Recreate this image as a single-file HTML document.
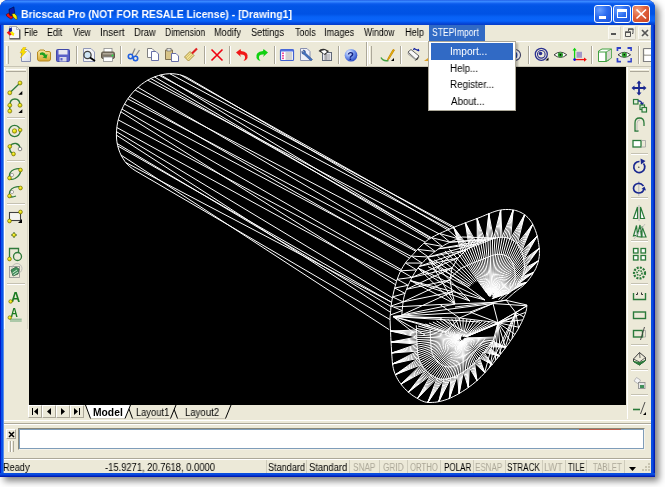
<!DOCTYPE html>
<html><head><meta charset="utf-8">
<style>
*{margin:0;padding:0;box-sizing:border-box}
html,body{width:665px;height:487px;overflow:hidden;background:#fff;font-family:"Liberation Sans",sans-serif;font-size:10px;color:#000;position:relative}
.a{position:absolute}
.t{position:absolute;white-space:nowrap;transform-origin:0 0;will-change:transform}
svg{position:absolute;overflow:visible}
.gr{position:absolute;width:3px;border-left:1px solid #fff;border-right:1px solid #aca899}
.sepv{position:absolute;width:2px;border-left:1px solid #aca899;border-right:1px solid #fff}
.seph{position:absolute;height:2px;border-top:1px solid #c5c2b2;border-bottom:1px solid #fff}
.nb{position:absolute;top:405px;width:14px;height:13px;background:#ece9d8;border:1px solid;border-color:#fff #aca899 #aca899 #fff}
.sp{position:absolute;top:460px;width:1px;height:13px;background:#cfccbc}
</style></head><body>
<!-- shadow -->
<div class="a" style="left:0px;top:0px;width:655px;height:477px;border-radius:8px 8px 0 0;box-shadow:4px 4px 7px rgba(0,0,0,0.5);background:#888"></div>
<div class="a" style="left:0;top:0;width:655px;height:477px;background:#0a3fd6;border-radius:8px 8px 0 0;overflow:hidden">
  <div class="a" style="left:0;top:0;width:655px;height:25px;background:linear-gradient(#1a50e0 0px,#3b8cff 1px,#3382ff 2px,#1a68f2 3px,#0a5aec 4px,#0255e6 6px,#0052e4 14px,#0862f6 17px,#0a64fa 21px,#0656ec 22px,#0442d2 24px,#0a3cc8 25px)"></div>
  <!-- frame side borders -->
  <div class="a" style="left:0;top:25px;width:4px;height:452px;background:linear-gradient(90deg,#0018c8 0,#0018c8 1px,#0850e8 1px,#0a58ee 3px,#5a8ae8 3px,#5a8ae8 4px)"></div>
  <div class="a" style="left:651px;top:25px;width:4px;height:452px;background:linear-gradient(90deg,#0a50e0 0,#0a4ce0 2px,#0020c0 3px,#001aa8 4px)"></div>
  <div class="a" style="left:0;top:473px;width:655px;height:4px;background:linear-gradient(#0a50e0 0,#0848dc 2px,#0020c0 3px,#001aa8 4px)"></div>
  <div class="a" style="left:4px;top:25px;width:647px;height:448px;background:#ece9d8"></div>
</div>
<!-- title icon -->
<svg style="left:0;top:0" width="24" height="24" viewBox="0 0 24 24">
 <path d="M9 9.3 L13.9 6.9 L14.7 13.4 L11.9 15.5 L9.4 14.3 Z" fill="#0a1aa8" stroke="#000830" stroke-width="0.6"/>
 <path d="M6.1 14.7 L8.6 13 L10.2 15.9 L13.1 15.9 L13.1 17.6 L11 19.2 L6.9 16.3 Z" fill="#f01010" stroke="#300000" stroke-width="0.5"/>
 <path d="M11.9 13.9 L14.3 13.4 L16.8 15.9 L17.2 19.2 L16 19.6 L13.1 17.1 Z" fill="#f8f000" stroke="#403000" stroke-width="0.5"/>
</svg>
<!-- title buttons -->
<div class="a" style="left:594px;top:5px;width:18px;height:18px;border:1px solid #fff;border-radius:3px;background:radial-gradient(circle at 30% 25%,#6aa0ff 0,#2b6cf0 45%,#1a50d8 100%)"></div>
<div class="a" style="left:599px;top:16px;width:7px;height:3px;background:#fff"></div>
<div class="a" style="left:613px;top:5px;width:18px;height:18px;border:1px solid #fff;border-radius:3px;background:radial-gradient(circle at 30% 25%,#6aa0ff 0,#2b6cf0 45%,#1a50d8 100%)"></div>
<div class="a" style="left:617px;top:9px;width:10px;height:9px;border:1px solid #fff;border-top-width:3px"></div>
<div class="a" style="left:632px;top:5px;width:18px;height:18px;border:1px solid #fff;border-radius:3px;background:radial-gradient(circle at 30% 25%,#f0a080 0,#e0603a 45%,#c84020 100%)"></div>
<svg style="left:635px;top:8px" width="13" height="12"><path d="M1.5 1.5 L11 10.5 M11 1.5 L1.5 10.5" stroke="#fff" stroke-width="1.7"/></svg>

<!-- menubar -->
<div class="a" style="left:4px;top:41px;width:647px;height:1px;background:#fff"></div>
<svg style="left:0;top:22px" width="24" height="20" viewBox="0 22 24 20">
 <path d="M9.5 26.5 H16.5 L19.5 29.5 V38.5 H9.5 Z" fill="#f8f8f8" stroke="#a0a0a0" stroke-width="0.8"/>
 <path d="M9.5 38.8 H19.8 V29.5" fill="none" stroke="#505050" stroke-width="1.3"/>
 <path d="M16.5 26.5 V29.5 H19.5" fill="none" stroke="#909090" stroke-width="0.6"/>
 <path d="M9 28.5 L11.8 27.3 L12 31.5 L10.3 32.8 L8.7 31.8 Z" fill="#101c98"/>
 <path d="M6.7 32.5 L9 31 L10.5 33 L12 33.5 L11.5 35 L9.5 35.5 Z" fill="#f01818"/>
 <path d="M10.2 32 L12 31.2 L14 33.2 L14.1 35.5 L12.8 35.8 L11 34 Z" fill="#f8e800"/>
</svg>
<div class="a" style="left:428.6px;top:25px;width:56.2px;height:16px;background:#316ac5"></div>
<!-- MDI buttons -->
<div class="a" style="left:608px;top:26px;width:13px;height:14px;background:#efede2;border:1px solid;border-color:#fbfaf4 #d4d0c0 #d4d0c0 #fbfaf4;border-radius:2px"></div>
<div class="a" style="left:611px;top:33px;width:5px;height:2px;background:#555"></div>
<div class="a" style="left:623px;top:26px;width:13px;height:14px;background:#efede2;border:1px solid;border-color:#fbfaf4 #d4d0c0 #d4d0c0 #fbfaf4;border-radius:2px"></div>
<svg style="left:625px;top:28px" width="9" height="9"><path d="M3.5 1 H8 V5.5 H7 M3.5 1 V3 M0.5 4 H5.5 V8.5 H0.5 Z" stroke="#555" fill="none"/><path d="M3 0.5 H8.5 V1.8 H3 Z M0 3.5 H6 V5 H0 Z" fill="#555"/></svg>
<div class="a" style="left:638px;top:26px;width:13px;height:14px;background:#efede2;border:1px solid;border-color:#fbfaf4 #d4d0c0 #d4d0c0 #fbfaf4;border-radius:2px"></div>
<svg style="left:640.5px;top:29px" width="9" height="9"><path d="M1 1 L7 7 M7 1 L1 7" stroke="#555" stroke-width="1.7"/></svg>

<!-- toolbar -->
<div class="a" style="left:4px;top:66px;width:647px;height:1px;background:#c8c5b5"></div>
<div class="gr" style="left:6px;top:46px;height:18px"></div>
<div class="sepv" style="left:76px;top:46px;height:18px"></div>
<div class="sepv" style="left:120px;top:46px;height:18px"></div>
<div class="sepv" style="left:204px;top:46px;height:18px"></div>
<div class="sepv" style="left:229px;top:46px;height:18px"></div>
<div class="sepv" style="left:274px;top:46px;height:18px"></div>
<div class="sepv" style="left:338px;top:46px;height:18px"></div>
<div class="a" style="left:366px;top:42px;width:2px;height:24px;border-left:1px solid #aca899;border-right:1px solid #fff"></div>
<div class="gr" style="left:369px;top:46px;height:18px"></div>
<div class="sepv" style="left:400px;top:46px;height:18px"></div>
<div class="sepv" style="left:528px;top:46px;height:18px"></div>
<div class="sepv" style="left:591px;top:46px;height:18px"></div>
<div class="sepv" style="left:638px;top:46px;height:18px"></div>
<svg style="left:0;top:0;will-change:transform" width="665" height="80" viewBox="0 0 665 80">
<defs>
 <linearGradient id="gpage" x1="0" y1="0" x2="1" y2="1"><stop offset="0" stop-color="#fff"/><stop offset="1" stop-color="#d8dce8"/></linearGradient>
 <radialGradient id="ghelp" cx="0.35" cy="0.3" r="0.7"><stop offset="0" stop-color="#e8f0ff"/><stop offset="0.5" stop-color="#7fa0f0"/><stop offset="1" stop-color="#3050c8"/></radialGradient>
 <linearGradient id="gfold" x1="0" y1="0" x2="0" y2="1"><stop offset="0" stop-color="#f8e8a0"/><stop offset="1" stop-color="#d8a830"/></linearGradient>
</defs>
<!-- New -->
<path d="M21.5 49.5 H27 L30.5 53 V61.5 H21.5 Z" fill="url(#gpage)" stroke="#8890b0"/>
<path d="M23 47.5 L26 47.5 L24 51.5 L26.5 51.5 L20.5 58 L22.5 53 L20 53 Z" fill="#f8e000" stroke="#e0b000" stroke-width="0.5"/>
<!-- Open -->
<path d="M37.5 52 L40 50 H44 L45.5 51.5 H49 Q50.5 51.5 50.5 53 V59 Q50.5 61 48.5 61 H39.5 Q37.5 61 37.5 59 Z" fill="url(#gfold)" stroke="#b88a20"/>
<path d="M40 53 Q44 51 46 55 L47.5 54 L46.5 58.5 L42.5 57.5 L44 56.5 Q43 54 40 55 Z" fill="#20a020"/>
<!-- Save -->
<rect x="56.5" y="49.5" width="13" height="12" rx="1" fill="#5a60c8" stroke="#4048a8"/>
<rect x="58.5" y="50" width="9" height="4.5" fill="#e8e8f0"/>
<rect x="59.5" y="57" width="7" height="4.5" fill="#d8d8e8"/>
<rect x="60.5" y="58" width="2" height="2.5" fill="#5a60c8"/>
<!-- Preview -->
<path d="M83.5 48.5 H91 L94.5 52 V61.5 H83.5 Z" fill="#f4f4f8" stroke="#9098b8"/>
<circle cx="87.5" cy="55" r="3.6" fill="#cfe4f4" stroke="#404040" stroke-width="1.3"/>
<path d="M90 57.5 L95 61" stroke="#000" stroke-width="1.8"/>
<!-- Print -->
<rect x="104" y="48.5" width="8" height="4" fill="#fff" stroke="#909090" stroke-width="0.8"/>
<rect x="101.5" y="52" width="13" height="6.5" rx="1.5" fill="#807868" stroke="#605848"/>
<rect x="103" y="53" width="10" height="1.5" fill="#b0a898"/>
<rect x="103.5" y="57" width="9" height="4.5" fill="#fff" stroke="#909090" stroke-width="0.8"/>
<circle cx="112.5" cy="55.5" r="1" fill="#20e040"/>
<!-- Cut -->
<path d="M132 55 L135 48.5 M135.5 56 L139.5 50" stroke="#8a8a8a" stroke-width="1.3"/>
<circle cx="130.5" cy="56.5" r="2.2" fill="none" stroke="#2060e0" stroke-width="1.6"/>
<circle cx="135.5" cy="58.5" r="2.2" fill="none" stroke="#2060e0" stroke-width="1.6"/>
<!-- Copy -->
<path d="M147.5 48.5 H152 L154.5 51 V57.5 H147.5 Z" fill="#fff" stroke="#808080"/>
<path d="M151.5 51.5 H156 L158.5 54 V60.5 H151.5 Z" fill="#fff" stroke="#6870a8"/>
<!-- Paste -->
<path d="M165.5 50 H172.5 V59.5 H165.5 Z" fill="#d8c488" stroke="#807050"/>
<rect x="167" y="48.5" width="4" height="2.5" fill="#e8e8e8" stroke="#606060" stroke-width="0.6"/>
<path d="M171.5 53.5 H176 L178.5 56 V61.5 H171.5 Z" fill="#fff" stroke="#6870a8"/>
<!-- Brush -->
<path d="M184.5 57 L190 51.5 L194 55.5 L188.5 61 Z" fill="#f0e090" stroke="#a89040"/>
<path d="M186 58 L191 53 M187.5 59.5 L192.5 54.5" stroke="#c8b060" stroke-width="0.7"/>
<path d="M192 53.5 L197 48.5" stroke="#e02020" stroke-width="2.2"/>
<!-- Red X -->
<path d="M211.5 49.5 L222.5 60.5 M222.5 49.5 L211.5 60.5" stroke="#f00010" stroke-width="1.6"/>
<!-- Undo -->
<path d="M241 51 Q249 52 247.5 58 Q246.5 60.5 243.5 61 Q246 58 244.5 55.5 Q243 54 240 54.5 L241 57 L236 52.5 L240.5 49 Z" fill="#f01818"/>
<!-- Redo -->
<path d="M241 51 Q249 52 247.5 58 Q246.5 60.5 243.5 61 Q246 58 244.5 55.5 Q243 54 240 54.5 L241 57 L236 52.5 L240.5 49 Z" fill="#10d010" transform="translate(504 0) scale(-1 1)"/>
<!-- Props -->
<rect x="280.5" y="49.5" width="13" height="11" rx="1" fill="#fff" stroke="#4060d0" stroke-width="1.2"/>
<rect x="280.5" y="49.5" width="13" height="2" fill="#5070e0"/>
<rect x="282" y="52.5" width="2" height="1.6" fill="#f050a0"/><rect x="282" y="55" width="2" height="1.6" fill="#f050a0"/><rect x="282" y="57.5" width="2" height="1.6" fill="#f050a0"/>
<path d="M285.5 53 H292 M285.5 55 H292 M285.5 57 H292 M285.5 59 H292" stroke="#808080" stroke-width="0.7"/>
<!-- Wrench doc -->
<path d="M300.5 48.5 H307 L310 51.5 V60.5 H300.5 Z" fill="#f0f0f8" stroke="#8890b0"/>
<path d="M302 51 Q301 54 304 54.5 L311 61 L312.5 59.5 L305.5 53 Q306 50 303 50 L304 52 L303 53 Z" fill="#4070c0" stroke="#304880" stroke-width="0.5"/>
<!-- third doc -->
<rect x="322.5" y="52.5" width="9" height="8" fill="#e8e8f0" stroke="#606878"/>
<path d="M324 55 H330 M324 57 H330 M324 59 H330 M326 53 V60" stroke="#707070" stroke-width="0.6"/>
<path d="M318.5 51 Q321 48 325 49 L329 51 L325 55 Z" fill="#303030"/>
<path d="M321 51 L325 50 L327 52 L324 54 Z" fill="#fff"/>
<!-- Help -->
<circle cx="351" cy="55.3" r="6.3" fill="url(#ghelp)"/>
<text x="347.3" y="59.5" font-family="Liberation Sans" font-weight="bold" font-size="11" fill="#102080">?</text>
<!-- Pencil -->
<path d="M381 57.5 Q383 61.5 388.5 60.5" stroke="#40a040" stroke-width="1.5" fill="none"/>
<path d="M394.5 50 L389 59 L387.5 60 L388 58.3 L393 49.5 Z" fill="#f0c000" stroke="#c08000" stroke-width="0.8"/>
<path d="M391 61 L394 58 V61 Z" fill="#000"/>
<!-- Eraser -->
<path d="M408 52 L411 49.5 L419 56 L416 59.5 Z" fill="#f8f8f8" stroke="#606060" stroke-width="1"/>
<path d="M408 52 Q406.5 54 410 56 L416 60.5 L416 59.5 L409 54 Z" fill="#a0a0a0"/>
<path d="M415 60.5 L419.5 56.5 L417.5 59.5 L414.5 61 Z" fill="#000"/>
<path d="M414 48.5 L419 51 M414.5 48 L413.5 50 M419 51 L418 49" stroke="#1020a0" stroke-width="1.2"/>
<!-- partial orange icon -->
<path d="M424 61 L428 58 L428 61 Z" fill="#e0a020"/>
<!-- dial partial -->
<circle cx="515" cy="55" r="5.5" fill="#f4f4f8" stroke="#404060" stroke-width="1.2"/>
<path d="M515 52 Q518 53 516 58" stroke="#2040a0" stroke-width="1.3" fill="none"/>
<!-- Orbit -->
<circle cx="541.3" cy="54.3" r="6" fill="none" stroke="#2a3090" stroke-width="1.3"/>
<circle cx="541.3" cy="54.3" r="3.8" fill="none" stroke="#2a3090" stroke-width="1.1"/>
<circle cx="540.5" cy="53.5" r="1.8" fill="#2a3090"/>
<path d="M545.5 60.5 L548.5 57.5 V60.5 Z" fill="#000"/>
<!-- Eye -->
<path d="M554 54.8 Q560.4 49.5 566.8 54.8 Q560.4 60 554 54.8 Z" fill="#fff" stroke="#404040" stroke-width="1"/>
<circle cx="560.4" cy="54.8" r="2.6" fill="#30a030"/>
<circle cx="560.4" cy="54.8" r="0.9" fill="#000"/>
<!-- UCS -->
<rect x="576.5" y="51.8" width="5.5" height="6" fill="#a098c8"/>
<path d="M574.6 59.6 V49.5" stroke="#10d010" stroke-width="1.3"/><path d="M572.5 50.5 L574.6 47.8 L576.7 50.5 Z" fill="#10d010"/>
<path d="M574.6 59.6 H585" stroke="#f01010" stroke-width="1.3"/><path d="M584 57.5 L586.8 59.6 L584 61.7 Z" fill="#f01010"/>
<circle cx="574.6" cy="59.6" r="1.3" fill="#1010e0"/>
<!-- Cube -->
<path d="M598.5 51 L602 49 H611.5 L609 52 V60 L606 61.5 H598.5 Z" fill="#fff" stroke="#40a040" stroke-width="1"/>
<path d="M606 52 L611.5 49 V58 L606 61.5 Z" fill="#d8d8d0" stroke="#40a040" stroke-width="0.8"/>
<path d="M598.5 52 H606 V61.5" stroke="#40a040" stroke-width="1" fill="none"/>
<!-- eye box -->
<path d="M617.5 51 V48 H621 M627.5 48 H631 V51 M631 58 V61.5 H627.5 M621 61.5 H617.5 V58" stroke="#3040c8" stroke-width="1.8" fill="none"/>
<rect x="618.5" y="49" width="12" height="12" fill="#e8e8f0" opacity="0.6"/>
<path d="M618 54.8 Q624.3 49.8 630.6 54.8 Q624.3 59.8 618 54.8 Z" fill="#fff" stroke="#404040"/>
<circle cx="624.3" cy="54.8" r="2.6" fill="#30a030"/><circle cx="624.3" cy="54.8" r="0.8" fill="#000"/>
<!-- partial frame -->
<path d="M643.5 48.5 H651 M643.5 48.5 V61.5 H651 M643.5 55 H651" stroke="#808080" stroke-width="1.2" fill="none"/>
<rect x="644.5" y="49.5" width="6.5" height="5" fill="#fff"/><rect x="644.5" y="56" width="6.5" height="5" fill="#fff"/>
</svg>


<!-- left toolbar -->
<div class="a" style="left:4px;top:67px;width:24px;height:262px;border-left:1px solid #fff;border-right:1px solid #d8d5c5"></div>
<div class="a" style="left:6px;top:69px;width:20px;height:3px;border-top:1px solid #fff;border-bottom:1px solid #aca899"></div>
<div class="seph" style="left:7px;top:117px;width:18px"></div>
<div class="seph" style="left:7px;top:160px;width:18px"></div>
<div class="seph" style="left:7px;top:203px;width:18px"></div>
<div class="seph" style="left:7px;top:283px;width:18px"></div>
<svg style="left:0;top:60px;will-change:transform" width="34" height="280" viewBox="0 60 34 280">
<defs><radialGradient id="gdot" cx="0.4" cy="0.35" r="0.6"><stop offset="0" stop-color="#ffff40"/><stop offset="1" stop-color="#d0c000"/></radialGradient></defs>
<g stroke="#2f7a3a" stroke-width="1.3" fill="none">
 <!-- line -->
 <path d="M9.8 92.8 L20 83"/>
 <!-- arc -->
 <path d="M9.8 105.3 Q9.8 99 14.9 99 Q20 99 20 105.3 M9.8 105.3 V111"/>
 <!-- circle -->
 <circle cx="14.6" cy="131" r="5.6"/>
 <!-- arc 3pt -->
 <path d="M9.8 146.5 Q12 143 16 143.5 Q20 144.5 20 149"/>
 <path d="M9.8 146.5 Q9 152 13.5 154"/>
 <!-- ellipse -->
 <path d="M9.5 178 Q8.5 172 14 169.5 Q20 167.5 20.5 170 Q21 175 15 178.5 Q10 180.5 9.5 178 Z"/>
 <!-- ellipse arc -->
 <path d="M9.5 196 Q8.5 190 14 187.5 Q20 185.5 20.5 188 M9.5 196 Q11 198 16 196"/>
 <!-- rect -->
 <rect x="9.5" y="212.5" width="11" height="8" stroke="#404040" stroke-width="1.1"/>
 <!-- rect + circle -->
 <path d="M9.5 259 V248.5 H18.5 V252"/>
 <circle cx="17.5" cy="256.5" r="4"/>
 <!-- hatch -->
 <rect x="9.5" y="266.5" width="10" height="11" stroke="#909090" stroke-width="0.8"/>
 <circle cx="17" cy="268.5" r="5" stroke="#b0b0b0" stroke-width="0.8"/>
 <path d="M11 270 L16 267 L19 269 L18 274 L13 276 Z" fill="#40905a" stroke="#306040" stroke-width="0.8"/>
 <path d="M12.5 273 L17 270 M13.5 275 L18 272" stroke="#e0f0e0" stroke-width="0.9"/>
</g>
<!-- rect fill white -->
<rect x="10.2" y="213.2" width="9.6" height="6.6" fill="#f4f4f0"/>
<path d="M18 223 L22 219 V223 Z" fill="#000"/>
<path d="M18.3 94.8 L22.3 91 V94.8 Z" fill="#000"/>
<path d="M18.3 113 L22.3 109.2 V113 Z" fill="#000"/>
<!-- point -->
<path d="M14 232 V238 M11 235 H17" stroke="#306030" stroke-width="1"/>
<circle cx="14" cy="235" r="1.8" fill="url(#gdot)" stroke="#607000" stroke-width="0.5"/>
<g fill="url(#gdot)" stroke="#6a6a00" stroke-width="0.6">
 <circle cx="9.8" cy="92.8" r="2"/><circle cx="20" cy="83" r="2"/>
 <circle cx="9.8" cy="105.3" r="2"/><circle cx="20" cy="105.3" r="2"/><circle cx="9.8" cy="111.1" r="2"/>
 <circle cx="14.5" cy="131" r="2.2"/><circle cx="20.2" cy="130" r="1.8"/>
 <circle cx="9.8" cy="146.5" r="1.9"/><circle cx="13.5" cy="154" r="1.9"/>
 <circle cx="9.5" cy="178" r="1.9"/><circle cx="20.5" cy="170" r="1.9"/>
 <circle cx="9.5" cy="196" r="1.9"/><circle cx="20.5" cy="188" r="1.9"/>
 <circle cx="9.5" cy="221" r="1.9"/><circle cx="20.5" cy="212" r="1.9"/>
 <circle cx="9.5" cy="259" r="1.9"/>
 
</g>
<circle cx="20" cy="149" r="1.8" fill="#fff" stroke="#404040" stroke-width="0.6"/>
<circle cx="12" cy="175" r="1.6" fill="#fff" stroke="#606060" stroke-width="0.5"/>
<circle cx="12" cy="192" r="1.6" fill="#fff" stroke="#606060" stroke-width="0.5"/>
<!-- A text -->
<text x="11" y="302" font-family="Liberation Sans" font-weight="bold" font-size="15" fill="#1a7a20" transform="translate(11 302) scale(0.85 1) translate(-11 -302)">A</text>
<text x="10.5" y="317.5" font-family="Liberation Sans" font-weight="bold" font-size="12" fill="#1a7a20" transform="translate(10.5 317.5) scale(0.85 1) translate(-10.5 -317.5)">A</text>
<path d="M10 319.2 H21.7 M10 321 H21.7" stroke="#60a070" stroke-width="0.9"/>
<circle cx="10.6" cy="301.5" r="1.8" fill="url(#gdot)" stroke="#6a6a00" stroke-width="0.6"/>
<circle cx="9.8" cy="317.6" r="1.8" fill="url(#gdot)" stroke="#6a6a00" stroke-width="0.6"/>
</svg>


<!-- right toolbar -->
<div class="a" style="left:627px;top:67px;width:24px;height:352px;border-left:1px solid #fff"></div>
<div class="a" style="left:630px;top:69px;width:19px;height:3px;border-top:1px solid #fff;border-bottom:1px solid #aca899"></div>
<div class="seph" style="left:631px;top:153px;width:17px"></div>
<div class="seph" style="left:631px;top:197px;width:17px"></div>
<div class="seph" style="left:631px;top:240px;width:17px"></div>
<div class="seph" style="left:631px;top:283px;width:17px"></div>
<div class="seph" style="left:631px;top:344px;width:17px"></div>
<div class="seph" style="left:631px;top:369px;width:17px"></div>
<div class="seph" style="left:631px;top:394px;width:17px"></div>
<svg style="left:620px;top:60px" width="40" height="370" viewBox="620 60 40 370">
<g fill="none" stroke-linecap="butt">
 <!-- move -->
 <path d="M639 82 V94 M633 88 H645" stroke="#1a2890" stroke-width="1.8"/>
 <path d="M636.5 83.5 L639 80.5 L641.5 83.5 Z M636.5 92.5 L639 95.5 L641.5 92.5 Z M634.5 85.5 L631.5 88 L634.5 90.5 Z M643.5 85.5 L646.5 88 L643.5 90.5 Z" fill="#1a2890"/>
 <!-- copy -->
 <rect x="633.5" y="99.5" width="4.5" height="4.5" stroke="#2a7a3a" stroke-width="1.2" fill="#e8f0e0"/>
 <path d="M638 101 Q641 100.5 642 103.5" stroke="#1a2890" stroke-width="1.2"/><path d="M640 103 L642.3 106 L644 102.5 Z" fill="#1a2890"/>
 <rect x="640" y="105" width="4.5" height="4.5" stroke="#2a7a3a" stroke-width="1.2" fill="#e8f0e0"/>
 <rect x="642" y="107.5" width="4.5" height="4.5" stroke="#2a7a3a" stroke-width="1.2" fill="#e8f0e0"/>
 <!-- fillet -->
 <path d="M638.5 131 H635 V123 Q635 118 639.5 118 Q644 118 644 123 V126" stroke="#2a7a3a" stroke-width="1.3"/>
 <path d="M637 131 V123.5 Q637 120 640 120" stroke="#b0b0b0" stroke-width="0.8"/>
 <!-- stretch rect -->
 <rect x="633" y="140.5" width="8" height="6.5" stroke="#2a7a3a" stroke-width="1.3" fill="#fff"/>
 <path d="M641 140.5 H645.5 V147 H641" stroke="#a0a0a0" stroke-width="0.8"/>
 <!-- rotate -->
 <path d="M643.5 163.5 A5.5 5.5 0 1 1 639.5 161.5" stroke="#1a2890" stroke-width="1.7"/>
 <path d="M640.5 158.5 L645.5 161 L641 164.5 Z" fill="#1a2890"/>
 <circle cx="638.8" cy="167.3" r="0.7" fill="#404040"/>
 <!-- 3d rotate -->
 <path d="M638.8 181 V196" stroke="#b8b8b8" stroke-width="1"/>
 <path d="M643.5 186 Q641 183 638 183.5 Q633.5 184.5 633.5 188.5 Q634 192.5 638.5 193 Q643 193 644 189" stroke="#1a2890" stroke-width="1.7"/>
 <path d="M641.5 189 L644.5 186.5 L646 190.5 Z" fill="#1a2890"/>
 <!-- mirror -->
 <path d="M639 205 V221" stroke="#b8b8b8" stroke-width="1"/>
 <path d="M637.5 207 L633.5 218.5 H637.5 Z M640.5 207 L644.5 218.5 H640.5 Z" stroke="#2a7a3a" stroke-width="1.2" fill="#fff"/>
 <!-- 3d mirror -->
 <path d="M636.5 225.5 L633.5 236 L637.5 235 Z M640 225 L637 236.5 L641.5 237 Z M642 226.5 L646 237 L642 237 Z" stroke="#2a7a3a" stroke-width="1.2" fill="#f0f0f0"/>
 <path d="M634 239 L645 224" stroke="#b8b8b8" stroke-width="0.8"/>
 <!-- array -->
 <rect x="633.5" y="248.5" width="4.5" height="4.5" stroke="#2a7a3a" stroke-width="1.3" fill="#fff"/>
 <rect x="641" y="248.5" width="4.5" height="4.5" stroke="#2a7a3a" stroke-width="1.3" fill="#fff"/>
 <rect x="633.5" y="255.5" width="4.5" height="4.5" stroke="#2a7a3a" stroke-width="1.3" fill="#fff"/>
 <rect x="641" y="255.5" width="4.5" height="4.5" stroke="#2a7a3a" stroke-width="1.3" fill="#fff"/>
 <!-- polar array -->
 <circle cx="639.5" cy="273" r="5.5" stroke="#2a7a3a" stroke-width="2.2" stroke-dasharray="2 1.2"/>
 <circle cx="639.5" cy="273" r="2.5" stroke="#2a7a3a" stroke-width="1.6" stroke-dasharray="1.5 1"/>
 <!-- trim -->
 <path d="M633.5 293 V299.5 H645.5 V293" stroke="#2a7a3a" stroke-width="1.4"/>
 <path d="M636 294.5 H637.5 V292.5 M643 294.5 H641.5 V292.5" stroke="#303030" stroke-width="1"/>
 <!-- extend -->
 <rect x="633.5" y="312" width="12" height="6.5" stroke="#2a7a3a" stroke-width="1.4"/>
 <!-- break -->
 <rect x="633.5" y="330.5" width="9" height="6.5" stroke="#2a7a3a" stroke-width="1.4"/>
 <path d="M642.5 330.5 H645.5 V337 H642.5" stroke="#a0a0a0" stroke-width="0.8"/>
 <path d="M640.5 340 L644.5 327" stroke="#404040" stroke-width="0.9"/>
 <!-- 3d solid -->
 <path d="M633.5 359 L639.5 352.5 L645.5 357.5 V360.5 L639.5 365 L633.5 361.5 Z" stroke="#404040" stroke-width="1"/>
 <path d="M633.5 359 L639.5 362 L645.5 357.5 M639.5 362 V365 M639.5 352.5 L640 358" stroke="#404040" stroke-width="0.8"/>
 <path d="M633.5 361.5 L639.5 365 L645.5 360.5 L639.5 362.5 Z" fill="#2a7a3a" stroke="#2a7a3a" stroke-width="1"/>
 <!-- explode -->
 <path d="M634 381 L636.5 377.5 L640.5 380 L638.5 384 Z" stroke="#b0b0b0" stroke-width="0.9" fill="#f4f4f4"/>
 <rect x="638.5" y="382.5" width="6.5" height="6" stroke="#909090" stroke-width="0.9" fill="#e8e8e8"/>
 <rect x="640" y="385" width="4" height="3" fill="#40905a"/>
 <!-- lengthen -->
 <path d="M633 409.5 H640" stroke="#2a7a3a" stroke-width="1.6"/>
 <path d="M640.5 414 L645 402" stroke="#404040" stroke-width="0.9"/>
 <path d="M643 415 L646 412 V415 Z" fill="#000"/>
</g>
</svg>


<!-- drawing area -->
<div class="a" style="left:29px;top:67px;width:597px;height:338px;background:#000;overflow:hidden">
<svg style="left:0;top:0" width="597" height="338"><path d="M159.9 11.5L418.8 162.9 M151.6 8.0L423.8 160.8 M140.8 6.7L425.4 160.1 M131.8 7.9L401.5 171.2 M130.1 8.3L420.7 162.1 M125.4 9.9L400.2 172.0 M121.8 11.5L402.4 170.7 M118.7 13.2L410.1 166.8 M108.9 20.3L387.5 183.5 M106.1 23.0L396.2 175.1 M100.4 29.6L380.6 191.1 M98.8 31.9L386.8 184.2 M95.5 37.1L382.1 189.4 M93.0 42.1L372.3 202.7 M91.9 44.8L366.5 217.7 M89.2 52.9L371.6 204.1 M87.8 60.5L367.6 214.0 M87.5 64.7L363.4 230.9 M87.4 68.1L361.5 245.3 M88.2 76.6L362.0 239.6 M88.7 78.9L362.6 235.3 M92.0 88.1L360.3 262.7 M96.9 95.6L362.6 235.3 M106.1 103.5L360.9 252.5 M159.9 11.5L156.9 9.9L153.8 8.7L150.6 7.7L147.2 7.1L143.8 6.7L140.3 6.7L136.7 7.0L133.1 7.6L129.6 8.5L126.0 9.7L122.5 11.2L119.0 13.0L115.7 15.1L112.4 17.4L109.3 20.0L106.3 22.8L103.5 25.8L100.9 29.0L98.4 32.4L96.2 35.9L94.2 39.6L92.4 43.4L90.9 47.3L89.7 51.2L88.7 55.2L88.0 59.2L87.6 63.2L87.4 67.1L87.5 71.0L87.9 74.8L88.6 78.5L89.6 82.0L90.8 85.4L92.3 88.7L94.1 91.7L96.0 94.6L98.2 97.2L100.7 99.5L103.3 101.6L106.1 103.5 M361.0 251.0L361.1 249.6L361.3 247.8L361.5 245.7L361.7 243.3L361.9 240.8L362.2 238.1L362.6 235.5L363.0 233.0L363.5 230.5L364.1 227.8L364.7 225.0L365.4 222.2L366.1 219.5L366.8 216.8L367.5 214.3L368.3 212.0L369.1 209.9L369.9 207.9L370.7 206.0L371.5 204.3L372.4 202.6L373.2 201.0L374.1 199.5L375.0 198.0L375.9 196.6L376.8 195.4L377.7 194.2L378.7 193.1L379.7 192.1L380.6 191.0L381.7 189.9L382.7 188.8L383.8 187.6L384.9 186.4L386.0 185.1L387.1 183.9L388.3 182.6L389.5 181.4L390.7 180.2L392.0 179.0L393.2 177.9L394.4 176.8L395.5 175.7L396.7 174.7L397.9 173.6L399.4 172.6L401.1 171.5L403.0 170.3L405.3 169.1L407.8 167.8L410.7 166.5L413.6 165.2L416.7 163.8L419.7 162.5L422.8 161.2L425.7 160.0L428.6 158.8L431.5 157.7L434.4 156.6L437.3 155.5L440.2 154.4L443.0 153.4L445.8 152.3L448.5 151.3L451.1 150.3L453.8 149.2L456.3 148.1L458.9 147.1L461.3 146.1L463.7 145.2L465.9 144.4L468.0 143.8L469.9 143.3L471.8 143.0L473.4 142.7L475.0 142.6L476.6 142.5L478.0 142.5L479.5 142.5L481.0 142.6L482.5 142.7L483.9 142.9L485.4 143.2L486.8 143.5L488.1 143.9L489.4 144.4L490.7 144.9L492.0 145.5L493.2 146.2L494.5 146.9L495.7 147.8L496.8 148.7L497.9 149.7L499.0 150.7L500.0 151.8L501.0 153.0L501.9 154.3L502.8 155.6L503.6 157.1L504.4 158.6L505.1 160.2L505.8 161.8L506.4 163.4L507.0 165.0L507.5 166.7L508.0 168.4L508.5 170.2L508.9 172.0L509.2 173.8L509.5 175.6L509.8 177.3L510.0 179.0L510.2 180.6L510.3 182.1L510.4 183.6L510.4 185.1L510.4 186.6L510.4 188.0L510.2 189.5L510.0 191.0L509.7 192.5L509.4 194.0L509.0 195.5L508.6 196.9L508.0 198.4L507.4 199.9L506.8 201.5L506.0 203.0L505.1 204.6L504.1 206.3L503.1 208.0L501.9 209.7L500.7 211.4L499.5 213.0L498.3 214.6L497.0 216.0L495.7 217.3L494.3 218.6L492.9 219.7L491.5 220.8L490.1 221.9L488.7 222.9L487.3 224.0L486.0 225.0L484.7 226.1L483.4 227.3L482.1 228.4L480.8 229.6L479.6 230.6L478.6 231.6L477.7 232.4L477.0 233.0 M498.0 238.0L497.9 238.7L497.8 239.5L497.7 240.5L497.6 241.6L497.4 242.9L497.0 244.3L496.6 245.8L496.0 247.5L495.3 249.3L494.5 251.3L493.5 253.4L492.5 255.6L491.3 257.9L490.0 260.4L488.6 263.0L487.0 265.6L485.2 268.4L483.2 271.3L481.1 274.4L478.9 277.6L476.5 280.8L474.0 284.0L471.5 287.3L469.0 290.4L466.4 293.6L463.7 296.8L460.9 300.1L458.0 303.4L455.1 306.6L452.2 309.6L449.2 312.5L446.2 315.2L443.2 317.7L440.0 320.0L436.9 322.3L433.6 324.4L430.5 326.3L427.3 328.1L424.3 329.6L421.4 331.0L418.6 332.2L415.8 333.1L413.1 333.9L410.5 334.5L407.9 335.0L405.5 335.3L403.2 335.4L401.0 335.5L399.0 335.4L397.2 335.2L395.5 334.8L393.9 334.2L392.3 333.6L390.8 332.8L389.2 331.9L387.6 331.0L385.9 329.9L384.1 328.8L382.3 327.5L380.5 326.0L378.8 324.6L377.1 323.0L375.5 321.4L374.0 319.7L372.6 318.0L371.3 316.2L370.0 314.4L368.8 312.5L367.7 310.5L366.7 308.4L365.8 306.2L365.0 304.0L364.4 301.7L363.9 299.4L363.5 297.0L363.3 294.5L363.1 291.9L362.9 289.1L362.7 286.2L362.5 283.0L362.3 279.3L362.0 275.0L361.8 270.4L361.6 265.7L361.4 261.1L361.2 257.0L361.1 253.5L361.0 251.0 M372.8 248.0L372.9 246.6L373.1 244.7L373.3 242.5L373.5 240.0L373.8 237.4L374.1 234.8L374.5 232.3L375.0 230.0L375.6 227.8L376.3 225.7L377.0 223.6L377.9 221.5L378.7 219.4L379.6 217.4L380.5 215.5L381.4 213.6L382.3 211.8L383.2 210.1L384.1 208.5L385.0 206.9L385.9 205.4L386.9 203.9L387.9 202.4L389.0 201.0L390.1 199.6L391.3 198.2L392.5 196.8L393.7 195.5L395.0 194.2L396.3 193.0L397.5 191.8L398.7 190.6L399.9 189.5L401.0 188.5L402.2 187.5L403.3 186.6L404.4 185.7L405.6 184.8L406.8 183.9L408.0 183.0L409.3 182.1L410.5 181.2L411.8 180.4L413.1 179.5L414.4 178.7L415.8 177.8L417.3 177.0L418.8 176.2L420.5 175.4L422.4 174.5L424.5 173.6L426.6 172.7L428.6 171.8L430.4 171.1L431.9 170.5L433.0 170.0 M361.3 248.0L373.2 243.6L362.1 239.0 M362.1 239.0L374.1 234.9L363.6 229.9 M363.6 229.9L376.0 226.4L365.7 221.0 M365.7 221.0L379.2 218.3L368.2 212.3 M368.2 212.3L383.0 210.4L371.7 203.8 M371.7 203.8L387.6 202.9L376.4 196.0 M376.4 196.0L393.1 196.1L382.4 189.1 M382.4 189.1L399.4 190.0L388.5 182.4 M388.5 182.4L406.1 184.4L395.1 176.1 M395.1 176.1L413.3 179.4L402.4 170.6 M402.4 170.6L420.9 175.2L410.6 166.5 M410.6 166.5L429.0 171.7L419.0 162.8 M372.8 248.0L426.0 237.0 M372.8 248.0L423.0 225.0 M374.1 234.9L423.0 225.0 M374.1 234.9L421.0 213.0 M377.5 222.3L421.0 213.0 M377.5 222.3L423.0 201.0 M383.0 210.4L423.0 201.0 M383.0 210.4L429.0 191.0 M390.2 199.4L429.0 191.0 M390.2 199.4L437.0 183.0 M399.4 190.0L437.0 183.0 M399.4 190.0L447.0 177.0 M409.6 181.8L447.0 177.0 M409.6 181.8L457.0 173.0 M420.9 175.2L457.0 173.0 M420.9 175.2L467.0 171.0 M433.0 170.0L467.0 171.0 M426.0 237.0L423.0 225.0L421.0 213.0L423.0 201.0L429.0 191.0L437.0 183.0L447.0 177.0L457.0 173.0L467.0 171.0 M381.4 213.6L441.0 234.0 M381.4 213.6L456.0 233.0 M381.4 213.6L426.0 237.0 M389.0 201.0L441.0 234.0 M389.0 201.0L456.0 233.0 M389.0 201.0L426.0 237.0 M398.7 190.6L441.0 234.0 M398.7 190.6L456.0 233.0 M398.7 190.6L426.0 237.0 M365.0 240.0L411.0 237.5L464.0 235.5L477.0 233.0 M432.3 184.3L424.7 160.4L440.3 181.0 M433.9 183.6L424.7 160.4 M435.5 183.0L424.7 160.4 M437.1 182.3L424.7 160.4 M438.7 181.6L424.7 160.4 M440.3 181.0L436.4 155.8L448.4 177.9 M441.9 180.4L436.4 155.8 M443.5 179.8L436.4 155.8 M445.2 179.1L436.4 155.8 M446.8 178.5L436.4 155.8 M448.4 177.9L448.1 151.4L456.5 174.8 M450.0 177.3L448.1 151.4 M451.6 176.7L448.1 151.4 M453.2 176.1L448.1 151.4 M454.8 175.4L448.1 151.4 M456.5 174.8L459.8 146.7L464.5 171.6 M458.1 174.2L459.8 146.7 M459.7 173.5L459.8 146.7 M461.3 172.9L459.8 146.7 M462.9 172.3L459.8 146.7 M464.5 171.6L471.7 143.0L473.0 170.2 M466.2 171.4L471.7 143.0 M467.9 171.1L471.7 143.0 M469.6 170.8L471.7 143.0 M471.3 170.5L471.7 143.0 M473.0 170.2L484.2 143.0L481.5 171.7 M474.7 170.5L484.2 143.0 M476.4 170.8L484.2 143.0 M478.1 171.1L484.2 143.0 M479.8 171.4L484.2 143.0 M481.5 171.7L495.6 147.8L488.4 176.8 M482.8 172.8L495.6 147.8 M484.2 173.8L495.6 147.8 M485.6 174.8L495.6 147.8 M487.0 175.8L495.6 147.8 M488.4 176.8L503.7 157.2L492.5 184.3 M489.2 178.3L503.7 157.2 M490.0 179.8L503.7 157.2 M490.9 181.3L503.7 157.2 M491.7 182.8L503.7 157.2 M492.5 184.3L508.2 168.9L494.7 192.7 M493.0 186.0L508.2 168.9 M493.4 187.7L508.2 168.9 M493.8 189.4L508.2 168.9 M494.3 191.0L508.2 168.9 M494.7 192.7L510.2 181.2L495.4 201.3 M494.9 194.4L510.2 181.2 M495.0 196.1L510.2 181.2 M495.1 197.9L510.2 181.2 M495.3 199.6L510.2 181.2 M495.4 201.3L509.5 193.7L493.4 209.7 M495.0 203.0L509.5 193.7 M494.6 204.7L509.5 193.7 M494.2 206.3L509.5 193.7 M493.8 208.0L509.5 193.7 M493.4 209.7L504.7 205.3L489.1 217.2 M492.6 211.2L504.7 205.3 M491.7 212.7L504.7 205.3 M490.9 214.2L504.7 205.3 M490.0 215.7L504.7 205.3 M489.1 217.2L497.5 215.4L483.3 223.5 M488.0 218.4L497.5 215.4 M486.8 219.7L497.5 215.4 M485.7 221.0L497.5 215.4 M484.5 222.3L497.5 215.4 M457.8 226.2L428.6 185.9 M459.9 228.8L430.9 184.9 M460.4 229.4L433.2 183.9 M460.6 229.5L435.5 182.9 M460.3 228.5L437.8 182.0 M459.3 225.8L440.1 181.0 M460.9 229.0L442.5 180.1 M460.3 226.8L444.8 179.2 M460.5 226.4L447.2 178.4 M461.0 227.8L449.5 177.5 M461.0 226.8L451.9 176.6 M461.6 229.4L454.2 175.7 M461.8 229.4L456.6 174.8 M461.8 228.5L458.9 173.8 M461.9 225.6L461.2 172.9 M462.1 227.0L463.6 172.0 M462.3 227.7L466.0 171.2 M462.6 226.0L468.4 170.6 M462.8 226.7L470.9 170.3 M462.8 227.7L473.4 170.2 M463.7 224.6L475.9 170.4 M463.8 225.3L478.4 170.8 M463.2 228.1L480.8 171.5 M464.1 226.2L483.1 172.5 M464.1 226.6L485.2 173.9 M465.2 224.8L487.1 175.5 M465.0 225.8L488.8 177.4 M463.9 228.4L490.2 179.4 M466.1 225.1L491.4 181.7 M463.6 229.5L492.4 184.0 M464.6 228.3L493.2 186.3 M465.7 227.0L493.9 188.7 M463.8 229.7L494.5 191.2 M464.9 228.6L494.9 193.7 M463.5 230.4L495.2 196.2 M465.6 228.4L495.4 198.7 M465.9 228.4L495.4 201.2 M465.2 229.2L495.1 203.7 M466.2 228.7L494.6 206.1 M464.3 230.3L493.9 208.5 M465.4 229.7L492.9 210.9 M465.0 230.1L491.8 213.1 M464.8 230.4L490.5 215.2 M464.3 230.7L489.0 217.3 M465.2 230.4L487.5 219.3 M465.2 230.6L485.9 221.2 M463.9 231.2L484.1 222.9 M464.1 231.2L482.1 224.5 M462.8 231.7L480.1 226.0 M439.9 220.6L399.0 199.6 M441.0 219.4L402.1 196.1 M442.1 218.3L405.2 192.8 M443.3 217.1L408.6 189.6 M444.5 216.1L412.0 186.5 M445.9 215.2L415.9 183.9 M447.3 214.4L420.0 181.8 M403.5 206.3L406.3 203.3L409.0 200.3L411.8 197.3L414.7 194.5L417.8 191.7L421.2 189.5L424.8 187.6L428.6 185.9L432.3 184.3L436.1 182.7L439.9 181.1L443.7 179.7L447.5 178.3L451.3 176.8L455.1 175.3L458.9 173.8L462.7 172.3L466.6 171.0L470.6 170.3L474.7 170.3L478.8 170.9L482.6 172.3L486.0 174.5L488.9 177.4L491.0 180.9L492.6 184.6L493.9 188.5L494.7 192.5L495.2 196.6L495.4 200.7L494.9 204.7L493.8 208.7L492.1 212.4L490.0 215.9L487.6 219.2L484.9 222.2L481.7 224.8L478.5 227.3L475.4 230.0L472.4 232.7 M419.6 213.4L421.6 211.2L423.6 209.0L425.6 206.8L427.8 204.8L430.0 202.8L432.4 201.2L435.1 199.8L437.8 198.6L440.5 197.4L443.2 196.3L446.0 195.1L448.7 194.1L451.5 193.1L454.3 192.0L457.0 190.9L459.8 189.8L462.5 188.7L465.3 187.8L468.3 187.3L471.2 187.3L474.1 187.7L476.9 188.7L479.4 190.3L481.5 192.5L483.0 195.0L484.2 197.7L485.1 200.5L485.7 203.4L486.1 206.3L486.2 209.3L485.9 212.2L485.1 215.1L483.8 217.8L482.3 220.3L480.6 222.7L478.6 224.9L476.3 226.8L473.9 228.6L471.7 230.5L469.5 232.5 M426.0 240.0L464.0 235.3L477.0 233.3L498.0 238.0 M463.5 274.0L476.9 280.2L459.3 279.7 M462.7 275.2L476.9 280.2 M461.9 276.3L476.9 280.2 M461.0 277.5L476.9 280.2 M460.2 278.6L476.9 280.2 M459.3 279.7L470.2 289.0L454.9 285.2 M458.4 280.8L470.2 289.0 M457.6 281.9L470.2 289.0 M456.7 283.0L470.2 289.0 M455.8 284.1L470.2 289.0 M454.9 285.2L463.1 297.5L450.3 290.6 M454.0 286.3L463.1 297.5 M453.1 287.4L463.1 297.5 M452.2 288.5L463.1 297.5 M451.2 289.5L463.1 297.5 M450.3 290.6L455.8 305.8L445.5 295.8 M449.4 291.7L455.8 305.8 M448.4 292.7L455.8 305.8 M447.5 293.7L455.8 305.8 M446.5 294.8L455.8 305.8 M445.5 295.8L448.0 313.6L440.3 300.5 M444.5 296.8L448.0 313.6 M443.4 297.7L448.0 313.6 M442.4 298.6L448.0 313.6 M441.3 299.6L448.0 313.6 M440.3 300.5L439.4 320.5L434.5 304.7 M439.1 301.4L439.4 320.5 M438.0 302.2L439.4 320.5 M436.8 303.0L439.4 320.5 M435.7 303.8L439.4 320.5 M434.5 304.7L430.1 326.5L428.4 308.2 M433.3 305.4L430.1 326.5 M432.1 306.1L430.1 326.5 M430.9 306.8L430.1 326.5 M429.7 307.5L430.1 326.5 M428.4 308.2L420.3 331.5L421.9 310.9 M427.1 308.7L420.3 331.5 M425.8 309.3L420.3 331.5 M424.5 309.8L420.3 331.5 M423.2 310.4L420.3 331.5 M421.9 310.9L409.8 334.6L415.0 312.2 M420.5 311.2L409.8 334.6 M419.1 311.4L409.8 334.6 M417.8 311.7L409.8 334.6 M416.4 311.9L409.8 334.6 M415.0 312.2L398.8 335.4L408.0 311.4 M413.6 312.0L398.8 335.4 M412.2 311.9L398.8 335.4 M410.8 311.7L398.8 335.4 M409.4 311.5L398.8 335.4 M408.0 311.4L388.5 331.5L401.9 307.9 M406.8 310.7L388.5 331.5 M405.6 310.0L388.5 331.5 M404.4 309.3L388.5 331.5 M403.1 308.6L388.5 331.5 M401.9 307.9L379.5 325.2L396.6 303.3 M400.8 306.9L379.5 325.2 M399.8 306.0L379.5 325.2 M398.7 305.1L379.5 325.2 M397.6 304.2L379.5 325.2 M396.6 303.3L372.0 317.1L392.3 297.6 M395.7 302.1L372.0 317.1 M394.9 301.0L372.0 317.1 M394.0 299.9L372.0 317.1 M393.2 298.7L372.0 317.1 M392.3 297.6L366.4 307.7L389.6 291.1 M391.8 296.3L366.4 307.7 M391.2 295.0L366.4 307.7 M390.7 293.7L366.4 307.7 M390.1 292.4L366.4 307.7 M389.6 291.1L363.5 297.0L388.6 284.1 M389.4 289.7L363.5 297.0 M389.2 288.3L363.5 297.0 M389.0 286.9L363.5 297.0 M388.8 285.5L363.5 297.0 M388.6 284.1L362.7 286.0L388.1 277.1 M388.5 282.7L362.7 286.0 M388.4 281.3L362.7 286.0 M388.3 279.9L362.7 286.0 M388.2 278.5L362.7 286.0 M388.1 277.1L362.0 275.0L387.8 270.0 M388.1 275.7L362.0 275.0 M388.0 274.3L362.0 275.0 M387.9 272.9L362.0 275.0 M387.8 271.4L362.0 275.0 M387.8 270.0L361.5 264.0L387.5 263.0 M387.7 268.6L361.5 264.0 M387.6 267.2L361.5 264.0 M387.6 265.8L361.5 264.0 M387.5 264.4L361.5 264.0 M437.6 270.9L466.2 270.1 M437.2 271.1L465.0 272.0 M438.1 271.4L463.7 273.8 M437.5 271.6L462.4 275.6 M435.9 271.4L461.1 277.4 M436.0 271.6L459.8 279.2 M436.6 272.1L458.4 280.9 M435.0 271.5L457.0 282.7 M435.9 272.2L455.6 284.4 M435.1 271.9L454.2 286.1 M435.0 271.9L452.8 287.8 M434.8 271.8L451.3 289.5 M435.9 273.4L449.8 291.2 M434.8 272.2L448.4 292.8 M434.8 272.5L446.8 294.5 M434.9 273.0L445.3 296.1 M435.2 274.4L443.7 297.6 M434.4 272.4L442.0 299.1 M434.5 273.5L440.3 300.5 M434.4 273.9L438.5 301.9 M434.4 275.1L436.7 303.2 M434.1 275.1L434.9 304.4 M433.9 275.4L433.0 305.6 M433.8 273.4L431.1 306.7 M433.6 274.0L429.2 307.8 M433.5 273.9L427.2 308.8 M432.9 276.0L425.1 309.7 M432.5 276.4L423.1 310.5 M433.3 273.2L420.9 311.2 M433.1 273.3L418.8 311.7 M432.9 273.6L416.6 312.0 M432.8 273.6L414.3 312.2 M432.1 274.7L412.1 312.2 M431.6 275.1L409.9 311.9 M432.3 273.7L407.8 311.3 M432.9 272.6L405.8 310.3 M431.5 274.1L403.9 309.1 M431.5 273.8L402.0 307.9 M430.7 274.4L400.2 306.6 M429.2 275.6L398.5 305.2 M430.0 274.6L396.9 303.6 M430.5 273.8L395.4 302.0 M429.9 274.0L394.1 300.2 M429.6 273.9L392.8 298.4 M432.1 272.2L391.7 296.5 M428.4 274.0L390.7 294.5 M428.8 273.5L389.9 292.4 M428.3 273.5L389.4 290.2 M428.6 273.0L389.0 288.0 M430.4 272.2L388.7 285.8 M430.4 272.0L388.6 283.6 M431.7 271.5L388.4 281.4 M429.3 271.8L388.3 279.2 M431.9 271.3L388.1 276.9 M431.8 271.2L388.0 274.7 M431.2 271.1L387.9 272.5 M431.4 271.0L387.8 270.3 M430.6 270.8L387.7 268.1 M431.9 270.8L387.6 265.8 M432.1 270.7L387.5 263.6 M431.4 270.5L387.4 261.4 M430.9 270.2L389.0 259.0 M430.3 269.8L392.7 258.0 M431.7 270.1L396.4 257.0 M429.6 269.0L400.1 256.0 M430.7 269.2L403.8 255.0 M432.1 269.8L407.5 253.9 M432.2 269.6L411.2 253.0 M432.3 269.4L415.0 252.6 M432.7 269.3L418.9 252.2 M433.2 269.7L422.7 251.8 M433.0 268.5L426.5 251.4 M433.5 268.2L430.3 251.0 M434.0 269.1L434.1 251.5 M434.4 269.1L437.9 252.1 M434.5 269.8L441.7 252.6 M434.8 269.8L445.5 253.2 M435.3 269.5L449.3 253.8 M435.6 269.6L453.1 254.2 M436.9 268.9L456.9 254.6 M436.0 269.8L460.8 254.9 M435.9 270.0L464.6 255.3 M438.7 268.9L468.4 255.6 M437.9 269.3L472.1 254.7 M437.0 269.7L475.7 253.4 M438.7 269.1L479.4 252.2 M437.0 269.8L483.0 251.0 M465.4 271.4L463.4 274.2L461.4 276.9L459.4 279.6L457.3 282.3L455.2 284.9L453.0 287.5L450.8 290.1L448.6 292.6L446.3 295.1L443.9 297.4L441.3 299.7L438.7 301.8L435.9 303.7L433.1 305.6L430.2 307.3L427.2 308.8L424.1 310.2L420.9 311.2L417.5 311.9L414.2 312.2L410.8 312.1L407.6 311.2L404.6 309.6L401.8 307.7L399.1 305.7L396.7 303.3L394.5 300.8L392.6 298.0L391.0 295.0L389.8 291.9L389.0 288.6L388.7 285.2L388.4 281.8L388.2 278.5L388.0 275.1L387.8 271.7L387.7 268.3L387.6 265.0L387.4 261.6L387.3 258.2 M456.1 271.3L454.7 273.3L453.3 275.2L451.9 277.1L450.4 278.9L448.9 280.8L447.4 282.6L445.8 284.4L444.2 286.2L442.6 287.9L440.9 289.6L439.2 291.2L437.3 292.6L435.4 294.0L433.4 295.3L431.3 296.5L429.2 297.6L427.0 298.5L424.8 299.3L422.4 299.8L420.1 300.0L417.7 299.9L415.4 299.2L413.3 298.1L411.3 296.8L409.5 295.4L407.7 293.7L406.2 291.9L404.9 290.0L403.7 287.9L402.9 285.7L402.4 283.3L402.1 281.0L402.0 278.6L401.8 276.2L401.7 273.9L401.5 271.5L401.4 269.1L401.3 266.7L401.2 264.4L401.1 262.0 M364.0 249.5L464.0 236.5 M364.0 249.5L430.5 251.0 M364.0 249.5L417.0 265.0 M364.0 249.5L385.0 266.0 M364.0 249.5L401.0 259.0 M364.0 249.5L441.0 245.0 M364.0 249.5L451.0 255.0 M364.0 249.5L411.0 251.0 M364.0 249.5L396.0 268.0 M411.0 237.5L430.5 251.0 M441.0 245.0L464.0 236.5 M441.0 245.0L469.0 255.7 M411.0 251.0L438.0 266.0 M430.5 251.0L464.0 236.5 M430.5 251.0L469.0 255.7 M430.5 251.0L417.0 265.0 M469.0 255.7L498.0 238.8 M469.0 255.7L486.8 245.6 M469.0 255.7L464.0 236.5 M464.0 236.5L498.0 238.8 M486.8 245.6L498.0 238.8 M477.0 233.0L486.8 245.6 M469.0 255.7L496.7 245.3 M469.0 255.7L493.7 252.9 M469.0 255.7L490.1 260.3 M469.0 255.7L485.9 267.3 M469.0 255.7L481.3 274.1 M469.0 255.7L476.5 280.8 M469.0 255.7L471.5 287.3 M469.0 255.7L466.3 293.6 M469.0 255.7L461.0 299.9 M469.0 255.7L455.6 306.0 M486.8 245.6L495.0 250.0 M486.8 245.6L489.6 261.2 M486.8 245.6L483.0 271.7 M486.8 245.6L475.8 281.8 M486.8 245.6L468.1 291.5 M486.8 245.6L460.1 301.0" stroke="#fff" stroke-width="1" fill="none"/></svg>
</div>

<!-- tabs -->
<div class="nb" style="left:28px"></div>
<div class="nb" style="left:42px"></div>
<div class="nb" style="left:56px"></div>
<div class="nb" style="left:70px"></div>
<svg style="left:28px;top:405px" width="60" height="13">
 <path d="M4.5 3 V10" stroke="#000"/><path d="M10 3 L6 6.5 L10 10 Z" fill="#000"/>
 <path d="M23 3 L19 6.5 L23 10 Z" fill="#000"/>
 <path d="M33 3 L37 6.5 L33 10 Z" fill="#000"/>
 <path d="M46 3 L50 6.5 L46 10 Z" fill="#000"/><path d="M51.5 3 V10" stroke="#000"/>
</svg>
<svg style="left:0;top:400px" width="260" height="22" viewBox="0 400 260 22">
 <path d="M172.5 405 L177.5 418 H225.5 L231 405 Z" fill="#ece9d8"/>
 <path d="M177.5 418.5 H225.5" stroke="#c8c4b4"/>
 <path d="M172.5 405 L177.5 418.5 M225.5 418.5 L231 405" fill="none" stroke="#000"/>
 <path d="M127.5 405 L132.5 418 H170.5 L176 405 Z" fill="#ece9d8"/>
 <path d="M132.5 418.5 H170.5" stroke="#c8c4b4"/>
 <path d="M127.5 405 L132.5 418.5 M170.5 418.5 L176 405" fill="none" stroke="#000"/>
 <path d="M85.5 405 L90.5 418 H125 L130.5 405 Z" fill="#fff"/>
 <path d="M90.5 418.5 H125" stroke="#d0ccc0"/>
 <path d="M85.5 405 L90.5 418.5 M125 418.5 L130.5 405" fill="none" stroke="#000"/>
</svg>

<!-- command area -->
<div class="a" style="left:4px;top:420px;width:647px;height:1px;background:#fff"></div>
<div class="a" style="left:4px;top:423px;width:647px;height:1px;background:#aca899"></div>
<div class="a" style="left:4px;top:424px;width:647px;height:1px;background:#fff"></div>
<div class="a" style="left:6px;top:429px;width:10px;height:10px;background:#ece9d8;border:1px solid;border-color:#fff #aca899 #aca899 #fff"></div>
<svg style="left:8px;top:431px" width="7" height="7"><path d="M1 1 L6 6 M6 1 L1 6" stroke="#000" stroke-width="1.5"/></svg>
<div class="a" style="left:8px;top:441px;width:3px;height:11px;border-left:1px solid #fff;border-right:1px solid #aca899"></div>
<div class="a" style="left:11px;top:441px;width:3px;height:11px;border-left:1px solid #fff;border-right:1px solid #aca899"></div>
<div class="a" style="left:18px;top:428px;width:627px;height:22px;background:#fff;border:1px solid;border-color:#8a8878 #f4f2ea #f4f2ea #8a8878"><div class="a" style="left:0;top:0;right:0;bottom:0;border:1px solid #7f9db9"></div></div>
<div class="a" style="left:579px;top:429px;width:42px;height:1px;background:#c06050"></div>

<!-- status bar -->
<div class="a" style="left:4px;top:458px;width:647px;height:1px;background:#aca899"></div>
<div class="a" style="left:4px;top:459px;width:647px;height:1px;background:#fff"></div>
<div class="sp" style="left:266px"></div>
<div class="sp" style="left:306px"></div>
<div class="sp" style="left:349px"></div>
<div class="sp" style="left:379px"></div>
<div class="sp" style="left:407px"></div>
<div class="sp" style="left:440px"></div>
<div class="sp" style="left:473px"></div>
<div class="sp" style="left:505px"></div>
<div class="sp" style="left:542px"></div>
<div class="sp" style="left:565px"></div>
<div class="sp" style="left:586px"></div>
<div class="sp" style="left:624px"></div>
<svg style="left:629px;top:467px" width="8" height="5"><path d="M0 0 H7 L3.5 4 Z" fill="#000"/></svg>
<svg style="left:641px;top:462px" width="10" height="10">
 <rect x="7" y="1" width="2" height="2" fill="#c8c4b0"/><rect x="4" y="4" width="2" height="2" fill="#c8c4b0"/><rect x="7" y="4" width="2" height="2" fill="#c8c4b0"/>
 <rect x="1" y="7" width="2" height="2" fill="#c8c4b0"/><rect x="4" y="7" width="2" height="2" fill="#c8c4b0"/><rect x="7" y="7" width="2" height="2" fill="#c8c4b0"/>
</svg>

<!-- dropdown menu -->
<div class="a" style="left:428px;top:41px;width:88px;height:70px;background:#fff;border:1px solid #aca899;box-shadow:2px 2px 2px rgba(0,0,0,0.25)"></div>
<div class="a" style="left:431px;top:43px;width:82px;height:17px;background:#316ac5"></div>

<div class="t" style="left:20.75px;top:9.00px;font-size:11px;line-height:11px;font-weight:bold;color:#fff;transform:scaleX(0.9470)">Bricscad Pro (NOT FOR RESALE License) - [Drawing1]</div>
<div class="t" style="left:23.95px;top:28.00px;font-size:10px;line-height:10px;font-weight:normal;color:#000;transform:scaleX(0.8533)">File</div>
<div class="t" style="left:47.01px;top:28.00px;font-size:10px;line-height:10px;font-weight:normal;color:#000;transform:scaleX(0.8875)">Edit</div>
<div class="t" style="left:73.00px;top:28.00px;font-size:10px;line-height:10px;font-weight:normal;color:#000;transform:scaleX(0.8182)">View</div>
<div class="t" style="left:100.02px;top:28.00px;font-size:10px;line-height:10px;font-weight:normal;color:#000;transform:scaleX(0.9792)">Insert</div>
<div class="t" style="left:133.77px;top:28.00px;font-size:10px;line-height:10px;font-weight:normal;color:#000;transform:scaleX(0.9318)">Draw</div>
<div class="t" style="left:165.15px;top:28.00px;font-size:10px;line-height:10px;font-weight:normal;color:#000;transform:scaleX(0.8500)">Dimension</div>
<div class="t" style="left:214.49px;top:28.00px;font-size:10px;line-height:10px;font-weight:normal;color:#000;transform:scaleX(0.9138)">Modify</div>
<div class="t" style="left:251.19px;top:28.00px;font-size:10px;line-height:10px;font-weight:normal;color:#000;transform:scaleX(0.9114)">Settings</div>
<div class="t" style="left:294.60px;top:28.00px;font-size:10px;line-height:10px;font-weight:normal;color:#000;transform:scaleX(0.8913)">Tools</div>
<div class="t" style="left:323.78px;top:28.00px;font-size:10px;line-height:10px;font-weight:normal;color:#000;transform:scaleX(0.9219)">Images</div>
<div class="t" style="left:364.40px;top:28.00px;font-size:10px;line-height:10px;font-weight:normal;color:#000;transform:scaleX(0.8583)">Window</div>
<div class="t" style="left:404.58px;top:28.00px;font-size:10px;line-height:10px;font-weight:normal;color:#000;transform:scaleX(0.9211)">Help</div>
<div class="t" style="left:431.94px;top:28.00px;font-size:10px;line-height:10px;font-weight:normal;color:#fff;transform:scaleX(0.8593)">STEPImport</div>
<div class="t" style="left:449.79px;top:47.00px;font-size:10px;line-height:10px;font-weight:normal;color:#fff;transform:scaleX(1.0143)">Import...</div>
<div class="t" style="left:449.83px;top:63.50px;font-size:10px;line-height:10px;font-weight:normal;color:#000;transform:scaleX(0.9741)">Help...</div>
<div class="t" style="left:449.82px;top:80.00px;font-size:10px;line-height:10px;font-weight:normal;color:#000;transform:scaleX(0.9814)">Register...</div>
<div class="t" style="left:450.80px;top:96.60px;font-size:10px;line-height:10px;font-weight:normal;color:#000;transform:scaleX(0.9735)">About...</div>
<div class="t" style="left:92.97px;top:407.50px;font-size:10px;line-height:10px;font-weight:bold;color:#000;transform:scaleX(1.0296)">Model</div>
<div class="t" style="left:135.66px;top:408.00px;font-size:10px;line-height:10px;font-weight:normal;color:#000;transform:scaleX(0.9353)">Layout1</div>
<div class="t" style="left:185.44px;top:408.00px;font-size:10px;line-height:10px;font-weight:normal;color:#000;transform:scaleX(0.9588)">Layout2</div>
<div class="t" style="left:3.39px;top:463.00px;font-size:10px;line-height:10px;font-weight:normal;color:#000;transform:scaleX(0.9143)">Ready</div>
<div class="t" style="left:104.90px;top:463.00px;font-size:10px;line-height:10px;font-weight:normal;color:#000;transform:scaleX(0.9368)">-15.9271, 20.7618, 0.0000</div>
<div class="t" style="left:268.09px;top:463.00px;font-size:10px;line-height:10px;font-weight:normal;color:#000;transform:scaleX(0.9103)">Standard</div>
<div class="t" style="left:308.66px;top:463.00px;font-size:10px;line-height:10px;font-weight:normal;color:#000;transform:scaleX(0.9410)">Standard</div>
<div class="t" style="left:352.98px;top:463.00px;font-size:10px;line-height:10px;font-weight:normal;color:#aca899;transform:scaleX(0.8231)">SNAP</div>
<div class="t" style="left:383.30px;top:463.00px;font-size:10px;line-height:10px;font-weight:normal;color:#aca899;transform:scaleX(0.8200)">GRID</div>
<div class="t" style="left:409.50px;top:463.00px;font-size:10px;line-height:10px;font-weight:normal;color:#aca899;transform:scaleX(0.7750)">ORTHO</div>
<div class="t" style="left:443.50px;top:463.00px;font-size:10px;line-height:10px;font-weight:normal;color:#000;transform:scaleX(0.8031)">POLAR</div>
<div class="t" style="left:474.90px;top:463.00px;font-size:10px;line-height:10px;font-weight:normal;color:#aca899;transform:scaleX(0.8030)">ESNAP</div>
<div class="t" style="left:507.19px;top:463.00px;font-size:10px;line-height:10px;font-weight:normal;color:#000;transform:scaleX(0.8077)">STRACK</div>
<div class="t" style="left:544.08px;top:463.00px;font-size:10px;line-height:10px;font-weight:normal;color:#aca899;transform:scaleX(0.9158)">LWT</div>
<div class="t" style="left:567.70px;top:463.00px;font-size:10px;line-height:10px;font-weight:normal;color:#000;transform:scaleX(0.7857)">TILE</div>
<div class="t" style="left:592.50px;top:463.00px;font-size:10px;line-height:10px;font-weight:normal;color:#aca899;transform:scaleX(0.7757)">TABLET</div>
</body></html>
